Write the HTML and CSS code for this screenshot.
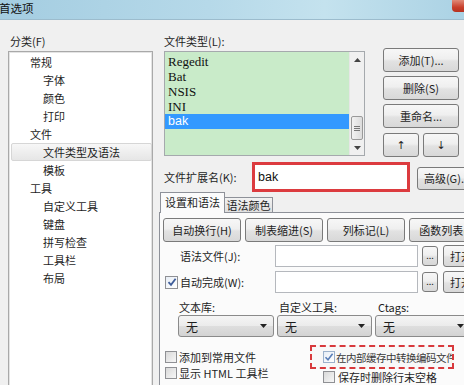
FILE: index.html
```html
<!DOCTYPE html>
<html lang="zh-CN">
<head>
<meta charset="utf-8">
<title>首选项</title>
<link rel="stylesheet" href="styles.css">
</head>
<body>
<div class="window">
  <div class="titlebar">
    <span class="title">首选项</span>
    <span class="close"></span>
  </div>
  <div class="main">
    <div class="left">
      <div class="caption">分类(F)</div>
      <div class="tree">
        <div class="node l1">常规</div>
        <div class="node l2">字体</div>
        <div class="node l2">颜色</div>
        <div class="node l2">打印</div>
        <div class="node l1">文件</div>
        <div class="node l2 sel">文件类型及语法</div>
        <div class="node l2">模板</div>
        <div class="node l1">工具</div>
        <div class="node l2">自定义工具</div>
        <div class="node l2">键盘</div>
        <div class="node l2">拼写检查</div>
        <div class="node l2">工具栏</div>
        <div class="node l2">布局</div>
      </div>
    </div>
    <div class="right">
      <div class="top">
        <div class="types">
          <div class="caption">文件类型(L):</div>
          <div class="listbox">
            <div class="items">
              <div class="item">Regedit</div>
              <div class="item">Bat</div>
              <div class="item">NSIS</div>
              <div class="item">INI</div>
              <div class="item sel">bak</div>
            </div>
            <div class="vscroll">
              <div class="sb-btn"><svg width="7" height="4" viewBox="0 0 7 4"><path d="M0 4 L3.5 0 L7 4 Z" fill="#444"/></svg></div>
              <div class="sb-track"><div class="sb-thumb"><span></span><span></span><span></span></div></div>
              <div class="sb-btn"><svg width="7" height="4" viewBox="0 0 7 4"><path d="M0 0 L3.5 4 L7 0 Z" fill="#444"/></svg></div>
            </div>
          </div>
        </div>
        <div class="side-buttons">
          <button class="btn">添加(T)...</button>
          <button class="btn">删除(S)</button>
          <button class="btn">重命名...</button>
          <div class="arrows">
            <button class="btn">↑</button>
            <button class="btn">↓</button>
          </div>
        </div>
      </div>
      <div class="ext-row">
        <div class="ext-label">文件扩展名(K):</div>
        <div class="ext-box">bak</div>
        <button class="btn adv">高级(G)...</button>
      </div>
      <div class="tabstrip">
        <div class="tab-spacer"></div>
        <div class="tab active">设置和语法</div>
        <div class="tab">语法颜色</div>
        <div class="tab-fill"></div>
      </div>
      <div class="panel">
        <div class="btn-row">
          <button class="btn wide">自动换行(H)</button>
          <button class="btn wide">制表缩进(S)</button>
          <button class="btn wide">列标记(L)</button>
          <button class="btn wide">函数列表(F)</button>
        </div>
        <div class="form-row">
          <div class="fl-label">语法文件(J):</div>
          <div class="textbox"></div>
          <button class="btn dots">...</button>
          <button class="btn open">打开</button>
        </div>
        <div class="form-row second">
          <div class="fl-check"><span class="check on"><svg width="10" height="10" viewBox="0 0 10 10"><path d="M1.5 5.2 L4 7.8 L8.6 1.8" fill="none" stroke="#3f5d9a" stroke-width="1.8"/></svg></span><span>自动完成(W):</span></div>
          <div class="textbox"></div>
          <button class="btn dots">...</button>
          <button class="btn open">打开</button>
        </div>
        <div class="combo-labels">
          <span>文本库:</span>
          <span>自定义工具:</span>
          <span>Ctags:</span>
        </div>
        <div class="combos">
          <div class="combo"><span>无</span><svg width="7" height="4" viewBox="0 0 7 4"><path d="M0 0 L3.5 4 L7 0 Z" fill="#222"/></svg></div>
          <div class="combo"><span>无</span><svg width="7" height="4" viewBox="0 0 7 4"><path d="M0 0 L3.5 4 L7 0 Z" fill="#222"/></svg></div>
          <div class="combo"><span>无</span><svg width="7" height="4" viewBox="0 0 7 4"><path d="M0 0 L3.5 4 L7 0 Z" fill="#222"/></svg></div>
        </div>
        <div class="bottom">
          <div class="bcol-left">
            <div class="crow"><span class="check"></span><span>添加到常用文件</span></div>
            <div class="crow"><span class="check"></span><span>显示 HTML 工具栏</span></div>
          </div>
          <div class="bcol-right">
            <div class="annot"><span class="check on small"><svg width="10" height="10" viewBox="0 0 10 10"><path d="M1.5 5.2 L4 7.8 L8.6 1.8" fill="none" stroke="#5a7fb8" stroke-width="1.6"/></svg></span><span class="annot-text">在内部缓存中转换编码文件</span></div>
            <div class="crow right-row"><span class="check"></span><span>保存时删除行末空格</span></div>
          </div>
        </div>
      </div>
    </div>
  </div>
</div>
</body>
</html>
```

FILE: styles.css
```css
* { box-sizing: border-box; }
html, body { margin: 0; padding: 0; }
body {
  width: 464px;
  height: 385px;
  overflow: hidden;
  background: #f0f0f0;
  font-family: "Noto Sans CJK SC", "Noto Sans", sans-serif;
  font-size: 11px;
  color: #1e1e1e;
}
.window { width: 464px; height: 385px; overflow: hidden; background: #f0f0f0; }

.titlebar {
  height: 20px;
  display: flex;
  justify-content: space-between;
  align-items: flex-start;
  background: linear-gradient(to right, #a4cde1, #b6d9e9 45%, #c4e2ee 70%, #abd2e4);
  border-bottom: 1px solid #9cbccd;
}
.title { line-height: 16px; font-size: 11.5px; margin-left: -1px; color: #111; }
.close {
  width: 12px;
  height: 12px;
  background: linear-gradient(#e08a78, #c9402c 60%, #b53220);
  border-bottom-left-radius: 4px;
}

.main { display: flex; }
.left { width: 145px; margin-left: 8px; flex-shrink: 0; }
.caption { height: 31px; padding-top: 13px; line-height: 16px; white-space: nowrap; }
.left .caption { padding-left: 2px; }

.tree {
  height: 345px;
  background: #fff;
  border: 1px solid #a9a9a9;
  box-shadow: inset 0 0 0 1px #e4e4e4;
  padding-top: 1px;
}
.node { height: 18px; line-height: 18px; white-space: nowrap; }
.l1 { padding-left: 21px; }
.l2 { padding-left: 34px; }
.node.sel {
  margin-left: 2px;
  background: linear-gradient(#f7f7f7, #e6e6e6);
  border: 1px solid #d6d6d6;
  border-radius: 2px;
  padding-left: 31px;
  line-height: 16px;
}

.right { margin-left: 6px; width: 330px; flex-shrink: 0; }
.top { display: flex; padding-left: 5px; }
.types { width: 201px; }
.listbox {
  height: 105px;
  display: flex;
  border: 1px solid #a5a9ad;
  background: #c9ebc9;
}
.items { flex: 1; padding-top: 2px; }
.item {
  height: 15px;
  line-height: 15px;
  padding-left: 3px;
  font-family: "Liberation Serif", serif;
  font-size: 13px;
  color: #111;
}
.item.sel { background: #3399ff; color: #fff; font-family: "Liberation Sans", sans-serif; font-size: 12.5px; }
.vscroll {
  width: 15px;
  display: flex;
  flex-direction: column;
  background: #f0f0f0;
  border-left: 1px solid #e6e6e6;
}
.sb-btn { height: 15px; display: flex; align-items: center; justify-content: center; }
.sb-track { flex: 1; display: flex; flex-direction: column; justify-content: flex-end; }
.sb-thumb {
  height: 24px;
  margin: 0 1px;
  border: 1px solid #9a9a9a;
  border-radius: 2px;
  background: linear-gradient(to right, #f2f2f2, #dcdcdc);
  display: flex;
  flex-direction: column;
  justify-content: center;
  align-items: center;
  gap: 1px;
}
.sb-thumb span { width: 6px; height: 1px; background: #777; }

.side-buttons {
  margin-left: 18px;
  margin-top: 28px;
  width: 76px;
  display: flex;
  flex-direction: column;
  gap: 4px;
}
.btn {
  height: 24px;
  border: 1px solid #7a7a7a;
  border-radius: 3px;
  background: linear-gradient(#f7f7f7, #efefef 45%, #e2e2e2 55%, #d8d8d8);
  font: inherit;
  color: #1e1e1e;
  padding: 0;
  white-space: nowrap;
  overflow: hidden;
}
.arrows { display: flex; gap: 4px; margin-top: 1px; }
.arrows .btn { width: 36px; font-family: "DejaVu Sans", sans-serif; font-size: 11px; }

.ext-row {
  display: flex;
  align-items: center;
  height: 30px;
  margin-top: 5px;
  padding-left: 5px;
}
.ext-label { width: 88px; white-space: nowrap; }
.ext-box {
  width: 158px;
  height: 30px;
  border: 3px solid #dc3b3f;
  background: #fff;
  padding-left: 3px;
  line-height: 24px;
  font-family: "Liberation Sans", sans-serif;
  font-size: 12.5px;
  color: #111;
}
.btn.adv { width: 60px; height: 23px; margin-left: 7px; margin-top: 2px; }

.tabstrip { display: flex; align-items: flex-end; height: 21px; }
.tab-spacer { width: 1px; height: 1px; border-bottom: 1px solid #8e9199; }
.tab {
  height: 16px;
  width: 48px;
  border: 1px solid #8e9199;
  border-left: none;
  background: linear-gradient(#f2f2f2, #e0e0e0);
  text-align: center;
  line-height: 14px;
  white-space: nowrap;
}
.tab.active {
  height: 21px;
  width: 65px;
  border-left: 1px solid #8e9199;
  border-bottom: none;
  background: #fbfbfb;
  line-height: 19px;
}
.tab-fill { flex: 1; height: 1px; border-bottom: 1px solid #8e9199; }

.panel {
  height: 200px;
  border: 1px solid #8e9199;
  border-top: none;
  background: #fbfbfb;
  padding: 5px 0 0 3px;
}
.btn-row { display: flex; gap: 4px; }
.btn.wide { width: 78px; }

.form-row {
  display: flex;
  align-items: center;
  height: 22px;
  margin-top: 3px;
}
.form-row.second { margin-top: 4px; }
.fl-label { width: 112px; padding-left: 17px; white-space: nowrap; }
.fl-check { width: 112px; padding-left: 2px; display: flex; align-items: center; gap: 2px; white-space: nowrap; }
.textbox { width: 143px; height: 22px; background: #fff; border: 1px solid #b5b8bd; }
.btn.dots { width: 16px; height: 20px; margin-left: 4px; font-size: 9px; line-height: 10px; }
.btn.open { width: 40px; height: 22px; margin-left: 5px; text-align: left; padding-left: 6px; }

.check {
  width: 13px;
  height: 13px;
  border: 1px solid #8f9094;
  background: linear-gradient(135deg, #d9d9d9, #f7f7f7);
  display: inline-flex;
  align-items: center;
  justify-content: center;
  flex-shrink: 0;
}
.check.on { background: linear-gradient(135deg, #e8eef6, #ffffff); }
.check.small { width: 12px; height: 12px; border-color: #9cb2cc; }

.combo-labels {
  display: grid;
  grid-template-columns: 96px 95px 96px;
  column-gap: 4px;
  padding-left: 16px;
  margin-top: 7px;
  line-height: 14px;
  white-space: nowrap;
}
.combos {
  display: grid;
  grid-template-columns: 96px 95px 96px;
  column-gap: 3px;
  padding-left: 15px;
  margin-top: 1px;
}
.combo {
  height: 22px;
  border: 1px solid #8a8a8a;
  border-radius: 3px;
  background: linear-gradient(#f5f5f5, #ebebeb 50%, #dedede 51%, #d3d3d3);
  display: flex;
  align-items: center;
  justify-content: space-between;
  padding: 0 6px 0 7px;
  font-size: 12px;
}

.bottom { display: flex; margin-top: 8px; }
.bcol-left { width: 145px; margin-left: 2px; padding-top: 4px; }
.crow { height: 16px; display: flex; align-items: center; gap: 2px; white-space: nowrap; }
.crow .check { width: 12px; height: 12px; }
.bcol-right { width: 146px; }
.annot {
  height: 24px;
  width: 144px;
  border: 2px dashed #d8393c;
  background: #f8f8f8;
  display: flex;
  align-items: center;
  padding-left: 11px;
  gap: 1px;
  white-space: nowrap;
  overflow: hidden;
}
.annot-text { color: #3a3a3a; letter-spacing: -0.5px; font-size: 10.5px; }
.right-row { padding-left: 13px; gap: 3px; }
```
